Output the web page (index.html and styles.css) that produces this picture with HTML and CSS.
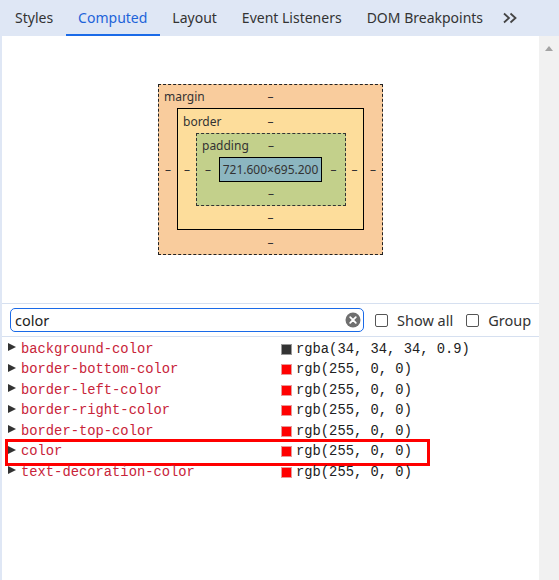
FILE: index.html
```html
<!DOCTYPE html>
<html>
<head>
<meta charset="utf-8">
<link rel="stylesheet" href="styles.css">
</head>
<body>
<div class="panel">
  <div class="tabs">
    <span class="tab">Styles</span>
    <span class="tab active">Computed</span>
    <span class="tab">Layout</span>
    <span class="tab">Event Listeners</span>
    <span class="tab">DOM Breakpoints</span>
    <span class="tab more"><svg width="16" height="14" viewBox="0 0 16 14"><path d="M2 2.5 7 7 2 11.5M8.5 2.5 13.5 7 8.5 11.5" fill="none" stroke="#444" stroke-width="1.8"/></svg></span>
  </div>
  <div class="body">
    <div class="main">
      <div class="boxmodel">
        <div class="bx margin">
          <div class="top"><span class="lbl">margin</span><span>–</span><span></span></div>
          <span class="side">–</span>
          <div class="bx border">
            <div class="top"><span class="lbl">border</span><span>–</span><span></span></div>
            <span class="side">–</span>
            <div class="bx padding">
              <div class="top"><span class="lbl">padding</span><span>–</span><span></span></div>
              <span class="side">–</span>
              <div class="content">721.600×695.200</div>
              <span class="side">–</span>
              <div class="bottom">–</div>
            </div>
            <span class="side">–</span>
            <div class="bottom">–</div>
          </div>
          <span class="side">–</span>
          <div class="bottom">–</div>
        </div>
      </div>
      <div class="filter">
        <div class="search">
          <span class="q">color</span>
          <svg class="clear" width="16" height="16" viewBox="0 0 16 16"><circle cx="8" cy="8" r="7.5" fill="#6f6f6f"/><path d="M5.2 5.2 10.8 10.8M10.8 5.2 5.2 10.8" stroke="#fff" stroke-width="1.8" stroke-linecap="round"/></svg>
        </div>
        <label class="chk"><span class="cb"></span>Show all</label>
        <label class="chk"><span class="cb"></span>Group</label>
      </div>
      <div class="props">
        <div class="row"><span class="tri"></span><span class="name">background-color</span><span class="val"><span class="sw dark"></span>rgba(34, 34, 34, 0.9)</span></div>
        <div class="row"><span class="tri"></span><span class="name">border-bottom-color</span><span class="val"><span class="sw"></span>rgb(255, 0, 0)</span></div>
        <div class="row"><span class="tri"></span><span class="name">border-left-color</span><span class="val"><span class="sw"></span>rgb(255, 0, 0)</span></div>
        <div class="row"><span class="tri"></span><span class="name">border-right-color</span><span class="val"><span class="sw"></span>rgb(255, 0, 0)</span></div>
        <div class="row"><span class="tri"></span><span class="name">border-top-color</span><span class="val"><span class="sw"></span>rgb(255, 0, 0)</span></div>
        <div class="row hl"><span class="tri"></span><span class="name">color</span><span class="val"><span class="sw"></span>rgb(255, 0, 0)</span></div>
        <div class="row"><span class="tri"></span><span class="name">text-decoration-color</span><span class="val"><span class="sw"></span>rgb(255, 0, 0)</span></div>
      </div>
    </div>
    <div class="scrollbar"><span class="up"></span></div>
  </div>
</div>
</body>
</html>
```

FILE: styles.css
```css
html, body { margin: 0; padding: 0; background: #fff; }
body { font-family: "Noto Sans", "Open Sans", sans-serif; color: #222; }
.panel { width: 559px; height: 580px; display: flex; flex-direction: column; overflow: hidden; }
.tabs {
  height: 36px; flex: none; background: #dfe7f5; display: flex; align-items: stretch;
  padding-left: 2.5px; box-sizing: border-box;
}
.tab {
  font-size: 14px; color: #333; padding: 0 12.5px; display: flex; align-items: center;
  border-bottom: 2px solid transparent; padding-top: 1px;
}
.tab.active { color: #1d63d9; border-bottom-color: #1a6ae8; }
.tab.more { padding: 1px 8px 0 6px; }
.tab.more svg { display: block; }
.body { flex: 1; display: flex; min-height: 0; }
.main { flex: 1; border-left: 2px solid #dfe7f5; display: flex; flex-direction: column; }
.scrollbar { width: 20px; flex: none; background: #f1f1f1; position: relative; }
.up {
  position: absolute; left: 6px; top: 10px; width: 0; height: 0;
  border-left: 4px solid transparent; border-right: 4px solid transparent; border-bottom: 5px solid #a3a3a3;
}
.boxmodel { height: 267px; flex: none; display: flex; justify-content: center; padding-top: 48px; box-sizing: border-box; font-size: 12px; color: #333; }
.bx {
  display: grid; align-self: start; align-items: center; justify-items: center;
}
.bx .top { grid-column: 1 / 4; display: grid; grid-template-columns: 1fr auto 1fr; width: 100%; align-items: center; }
.bx .lbl { justify-self: start; padding-left: 5px; }
.bx .bottom { grid-column: 1 / 4; }
.margin { width: 225px; height: 171px; box-sizing: border-box; border: 1px dashed #222; background: #f9cc9d; grid-template-columns: 18px auto 18px; grid-template-rows: 23px auto 24px; }
.border { border: 1px solid #000; background: #fddd9b; grid-template-columns: 18px auto 17px; grid-template-rows: 24px auto 23px; }
.padding { border: 1px dashed #333; background: #c3d08b; grid-template-columns: 22px auto 23px; grid-template-rows: 23px auto 23px; }
.content { border: 1px solid #000; background: #8cb6c0; height: 25px; box-sizing: border-box; width: 103px; display: flex; align-items: center; justify-content: center; font-size: 12px; color: #333; }
.filter {
  flex: none; border-top: 1px solid #d6e0f0; border-bottom: 1px solid #d6e0f0;
  display: flex; align-items: center; box-sizing: border-box; height: 34px; padding-left: 8px;
}
.search {
  width: 354px; height: 24px; box-sizing: border-box; border: 1px solid #1a6ae8; border-radius: 5px;
  display: flex; align-items: center; justify-content: space-between; padding: 0 2px 0 4px;
}
.q { font-size: 14.5px; color: #222; }
.clear { display: block; }
.chk { display: flex; align-items: center; font-size: 14.5px; color: #333; margin-left: 11px; }
.chk + .chk { margin-left: 13px; }
.cb { width: 13px; height: 13px; border: 1px solid #555; border-radius: 2px; margin-right: 9px; box-sizing: border-box; }
.props { padding-top: 2px; font-family: "Liberation Mono", "DejaVu Sans Mono", monospace; font-size: 13.8px; }
.row { height: 20.5px; display: flex; align-items: center; position: relative; }
.tri {
  width: 0; height: 0; margin-left: 6px; margin-right: 5px;
  border-top: 4.5px solid transparent; border-bottom: 4.5px solid transparent; border-left: 8px solid #333;
  align-self: center; position: relative; top: -2px;
}
.name { color: #c8243a; width: 260px; }
.val { color: #222; display: flex; align-items: center; }
.sw { width: 11px; height: 11px; background: #f00; border: 1px solid #e89999; box-sizing: border-box; margin-right: 4px; }
.sw.dark { background: #333; border-color: #999; }
.row.hl::after {
  content: ""; position: absolute; left: 3px; width: 425px; height: 27px; box-sizing: border-box;
  border: 3px solid #f00; top: -3px;
}
```
